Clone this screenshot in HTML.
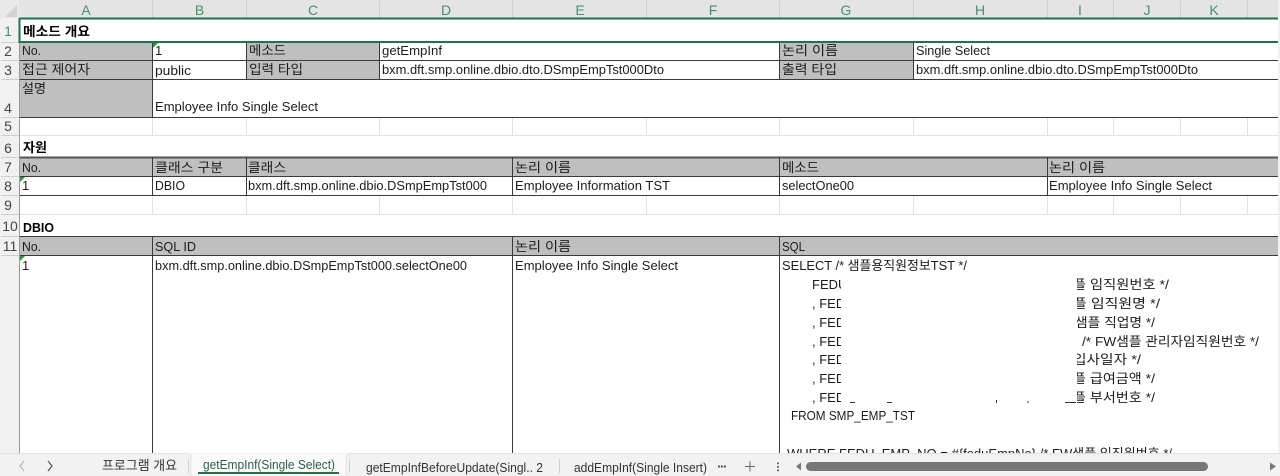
<!DOCTYPE html>
<html lang="ko"><head><meta charset="utf-8"><title>Sheet</title>
<style>
html,body{margin:0;padding:0;background:#fff;width:1280px;height:476px;overflow:hidden}
svg{display:block}
text{font-family:"Liberation Sans","Noto Sans CJK KR",sans-serif;font-size:13px;fill:#1c1c1c}
.b{font-weight:bold;fill:#000}
.h{fill:#4a8f6c;font-size:14px;text-anchor:middle}
.r{fill:#444;font-size:14px;text-anchor:middle}
.g{fill:#bfbfbf}
.d{stroke:#3a3a3a;stroke-width:1;fill:none}
.l{stroke:#e2e2e2;stroke-width:1;fill:none}
.n{stroke:#cfcfcf;stroke-width:1;fill:none}
.t{fill:#1f9a3c}
</style></head><body>
<svg width="1280" height="476" viewBox="0 0 1280 476" xmlns="http://www.w3.org/2000/svg">
<defs>
<clipPath id="sheet"><rect x="0" y="0" width="1278" height="453"/></clipPath>
<clipPath id="right"><rect x="1077" y="256" width="201" height="150"/></clipPath>
<clipPath id="fedu"><rect x="780" y="256" width="61" height="150"/></clipPath>
</defs>
<rect width="1280" height="476" fill="#fff"/>
<rect x="0" y="0" width="1280" height="19" fill="#e4e4e4"/>
<rect x="0" y="0" width="19" height="453" fill="#f1f1f1"/>
<rect x="1278" y="0" width="2" height="453" fill="#f1f1f1"/>
<rect x="0" y="0" width="19" height="18" fill="#e9e9e9"/>
<polygon points="5,17 17,17 17,5" fill="#d2d2d2"/>
<path class="n" d="M152.500 1V18M246.500 1V18M379.500 1V18M512.500 1V18M646.500 1V18M779.500 1V18M913.500 1V18M1047.500 1V18M1113.500 1V18M1180.500 1V18M1247.500 1V18"/>
<path class="n" d="M1 60.500H19M1 79.500H19M1 117.500H19M1 135.500H19M1 157.500H19M1 176.500H19M1 195.500H19M1 214.500H19M1 236.500H19M1 255.500H19M1 42.500H19"/>
<text class="h" x="86" y="15">A</text><text class="h" x="199.500" y="15">B</text><text class="h" x="313" y="15">C</text><text class="h" x="446" y="15">D</text><text class="h" x="580" y="15">E</text><text class="h" x="713" y="15">F</text><text class="h" x="846" y="15">G</text><text class="h" x="980" y="15">H</text><text class="h" x="1080" y="15">I</text><text class="h" x="1147" y="15">J</text><text class="h" x="1214" y="15">K</text>
<text class="r" x="8" y="36" style="fill:#4a8f6c">1</text><text class="r" x="8" y="56">2</text><text class="r" x="8" y="75">3</text><text class="r" x="8" y="113">4</text><text class="r" x="8" y="131">5</text><text class="r" x="8" y="153">6</text><text class="r" x="8" y="172">7</text><text class="r" x="8" y="191">8</text><text class="r" x="8" y="210">9</text><text class="r" x="10" y="231">10</text><text class="r" x="10" y="251">11</text>
<rect class="g" x="20" y="43" width="132" height="36"/>
<rect class="g" x="247" y="43" width="132" height="36"/>
<rect class="g" x="780" y="43" width="133" height="36"/>
<rect class="g" x="20" y="79" width="132" height="38"/>
<rect class="g" x="20" y="158" width="1258" height="18"/>
<rect class="g" x="20" y="237" width="1258" height="18"/>
<path class="l" d="M20 135.500H1278M20 214.500H1278M152.500 118V135M246.500 118V135M379.500 118V135M512.500 118V135M646.500 118V135M779.500 118V135M913.500 118V135M1047.500 118V135M1113.500 118V135M1180.500 118V135M1247.500 118V135M152.500 196V214M246.500 196V214M379.500 196V214M512.500 196V214M646.500 196V214M779.500 196V214M913.500 196V214M1047.500 196V214M1113.500 196V214M1180.500 196V214M1247.500 196V214"/>
<path class="d" d="M20 60.500H1278M20 79.500H1278M20 117.500H1278M20 176.500H1278M20 195.500H1278M20 236.500H1278M20 255.500H1278"/>
<path d="M20 157.500H1278" stroke="#555" stroke-width="2" fill="none"/>
<path class="d" d="M152.500 42V117M246.500 42V79M379.500 42V79M779.500 42V79M913.500 42V79"/>
<path class="d" d="M152.500 157V195M246.500 157V195M512.500 157V195M779.500 157V195M1047.500 157V195"/>
<path class="d" d="M152.500 236V453M512.500 236V453M779.500 236V453"/>
<path d="M19.500 43V453" stroke="#9a9a9a" stroke-width="1"/>
<path d="M19.500 18.500H1278M19.500 18V43M19 42H1278" stroke="#217346" stroke-width="2" fill="none"/>
<polygon class="t" points="153,43 158,43 153,48"/><polygon class="t" points="20,177 25,177 20,182"/><polygon class="t" points="20,256 25,256 20,261"/>
<text class="b" x="23" y="36" textLength="67" lengthAdjust="spacingAndGlyphs">메소드 개요</text>
<text x="22" y="55" textLength="19" lengthAdjust="spacingAndGlyphs">No.</text><text x="155" y="55">1</text><text x="249" y="55" textLength="37" lengthAdjust="spacingAndGlyphs">메소드</text><text x="382" y="55" textLength="60" lengthAdjust="spacingAndGlyphs">getEmpInf</text><text x="782" y="55" textLength="56" lengthAdjust="spacingAndGlyphs">논리 이름</text><text x="916" y="55" textLength="74" lengthAdjust="spacingAndGlyphs">Single Select</text>
<text x="22" y="74" textLength="68" lengthAdjust="spacingAndGlyphs">접근 제어자</text><text x="155" y="75" textLength="36" lengthAdjust="spacingAndGlyphs">public</text><text x="249" y="74" textLength="54" lengthAdjust="spacingAndGlyphs">입력 타입</text><text x="382" y="74" textLength="282" lengthAdjust="spacingAndGlyphs">bxm.dft.smp.online.dbio.dto.DSmpEmpTst000Dto</text><text x="782" y="74" textLength="55" lengthAdjust="spacingAndGlyphs">출력 타입</text><text x="916" y="74" textLength="282" lengthAdjust="spacingAndGlyphs">bxm.dft.smp.online.dbio.dto.DSmpEmpTst000Dto</text>
<text x="22" y="93" textLength="24" lengthAdjust="spacingAndGlyphs">설명</text><text x="155" y="111" textLength="163" lengthAdjust="spacingAndGlyphs">Employee Info Single Select</text>
<text class="b" x="23" y="152" textLength="24" lengthAdjust="spacingAndGlyphs">자원</text>
<text x="22" y="172" textLength="19" lengthAdjust="spacingAndGlyphs">No.</text><text x="155" y="172" textLength="68" lengthAdjust="spacingAndGlyphs">클래스 구분</text><text x="248" y="172" textLength="38" lengthAdjust="spacingAndGlyphs">클래스</text><text x="515" y="172" textLength="56" lengthAdjust="spacingAndGlyphs">논리 이름</text><text x="782" y="172" textLength="37" lengthAdjust="spacingAndGlyphs">메소드</text><text x="1049" y="172" textLength="56" lengthAdjust="spacingAndGlyphs">논리 이름</text>
<text x="22" y="190">1</text><text x="155" y="190" textLength="30" lengthAdjust="spacingAndGlyphs">DBIO</text><text x="248" y="190" textLength="239" lengthAdjust="spacingAndGlyphs">bxm.dft.smp.online.dbio.DSmpEmpTst000</text><text x="515" y="190" textLength="155" lengthAdjust="spacingAndGlyphs">Employee Information TST</text><text x="782" y="190" textLength="72" lengthAdjust="spacingAndGlyphs">selectOne00</text><text x="1049" y="190" textLength="163" lengthAdjust="spacingAndGlyphs">Employee Info Single Select</text>
<text class="b" x="23" y="232" textLength="31" lengthAdjust="spacingAndGlyphs">DBIO</text>
<text x="22" y="251" textLength="19" lengthAdjust="spacingAndGlyphs">No.</text><text x="155" y="251" textLength="41" lengthAdjust="spacingAndGlyphs">SQL ID</text><text x="515" y="251" textLength="56" lengthAdjust="spacingAndGlyphs">논리 이름</text><text x="782" y="251" textLength="23" lengthAdjust="spacingAndGlyphs">SQL</text>
<text x="22" y="270">1</text><text x="155" y="270" textLength="312" lengthAdjust="spacingAndGlyphs">bxm.dft.smp.online.dbio.DSmpEmpTst000.selectOne00</text><text x="515" y="270" textLength="163" lengthAdjust="spacingAndGlyphs">Employee Info Single Select</text>
<text x="782" y="270" textLength="185" lengthAdjust="spacingAndGlyphs">SELECT /* 샘플용직원정보TST */</text>
<g clip-path="url(#fedu)">
<text x="812" y="289">FEDU</text><text x="812" y="308">, FEDU</text><text x="812" y="327">, FEDU</text><text x="812" y="346">, FEDU</text><text x="812" y="364">, FEDU</text><text x="812" y="383">, FEDU</text><text x="812" y="402">, FEDU</text>
</g>
<g clip-path="url(#right)">
<text x="1073" y="289" textLength="96" lengthAdjust="spacingAndGlyphs">플 임직원번호 */</text>
<text x="1073" y="308" textLength="87" lengthAdjust="spacingAndGlyphs">플 임직원명 */</text>
<text x="1075" y="327" textLength="80" lengthAdjust="spacingAndGlyphs">샘플 직업명 */</text>
<text x="1082" y="346" textLength="177" lengthAdjust="spacingAndGlyphs">/* FW샘플 관리자임직원번호 */</text>
<text x="1073" y="364" textLength="68" lengthAdjust="spacingAndGlyphs">입사일자 */</text>
<text x="1073" y="383" textLength="82" lengthAdjust="spacingAndGlyphs">플 급여금액 */</text>
<text x="1073" y="402" textLength="82" lengthAdjust="spacingAndGlyphs">플 부서번호 */</text>
</g>
<path d="M850 402.500h5M887 402.500h5M996.500 400v3M1028 401v2M1065 402.500h11" stroke="#333" stroke-width="1"/>
<text x="791" y="420" textLength="124" lengthAdjust="spacingAndGlyphs">FROM SMP_EMP_TST</text>
<g clip-path="url(#sheet)"><text x="787" y="458" textLength="385" lengthAdjust="spacingAndGlyphs">WHERE FEDU_EMP_NO = #{feduEmpNo} /* FW샘플 임직원번호 */</text></g>
<rect x="0" y="453" width="1280" height="23" fill="#f2f2f2"/>
<path d="M0 453.500H186Q191 453.500 191 458V476H346V458Q346 453.500 351 453.500H1280" fill="none" stroke="#e2e2e2"/>
<rect x="191.500" y="454" width="154" height="22" fill="#fbfbfb"/>
<path d="M24 461l-4 5 4 5" fill="none" stroke="#b5b5b5" stroke-width="1.2"/>
<path d="M48 461l4 5-4 5" fill="none" stroke="#555" stroke-width="1.2"/>
<text x="102" y="470" textLength="75" lengthAdjust="spacingAndGlyphs" style="fill:#333">프로그램 개요</text>
<path d="M188.500 459V473M349.500 459V473M559.500 459V473" stroke="#d0d0d0"/>
<text x="203" y="469" textLength="132" lengthAdjust="spacingAndGlyphs" style="fill:#2d5f46">getEmpInf(Single Select)</text>
<rect x="198" y="472" width="141" height="2" fill="#217346"/>
<text x="366" y="472" textLength="177" lengthAdjust="spacingAndGlyphs" style="fill:#333">getEmpInfBeforeUpdate(Singl.. 2</text>
<text x="574" y="472" textLength="133" lengthAdjust="spacingAndGlyphs" style="fill:#333">addEmpInf(Single Insert)</text>
<path d="M718 466.500h1.800M721 466.500h1.800M724 466.500h1.800" stroke="#444" stroke-width="2"/>
<path d="M745 466.500h10M750 461.500v10" stroke="#666" stroke-width="1"/>
<path d="M778 462.500v1.800M778 466v1.800M778 469.500v1.800" stroke="#444" stroke-width="1.600"/>
<polygon points="796,466.500 801,462.500 801,470.500" fill="#777"/>
<rect x="806" y="462" width="402" height="9" rx="4.500" fill="#777"/>
<polygon points="1276,466.500 1270,462.500 1270,470.500" fill="#777"/>
</svg>
</body></html>
